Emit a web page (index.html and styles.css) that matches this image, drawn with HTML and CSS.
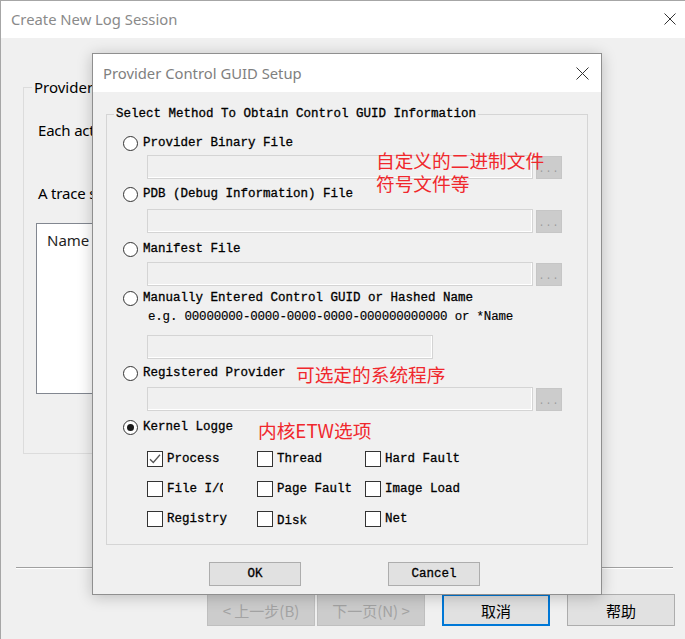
FILE: index.html
```html
<!DOCTYPE html>
<html lang="zh">
<head>
<meta charset="utf-8">
<title>Create New Log Session</title>
<link rel="stylesheet" href="styles.css">
</head>
<body>
<div class="win">
  <div class="titlebar">
    <span class="title">Create New Log Session</span>
    <svg class="close" width="12" height="12" viewBox="0 0 12 12"><path d="M0.5 0.5L11.5 11.5M11.5 0.5L0.5 11.5" stroke="#333" stroke-width="1" fill="none"/></svg>
  </div>
  <div class="win-body">
    <fieldset class="outer-group">
      <legend>Provider List</legend>
      <p class="outer-text t1">Each active provider in the trace session is listed below.</p>
      <p class="outer-text t2">A trace session must contain at least one provider.</p>
      <div class="listbox"><div class="list-head">Name</div></div>
    </fieldset>
    <div class="separator"></div>
    <div class="wiz-buttons">
      <button class="wbtn disabled">&lt; 上一步(B)</button>
      <button class="wbtn disabled second">下一页(N) &gt;</button>
      <button class="wbtn default">取消</button>
      <button class="wbtn">帮助</button>
    </div>
  </div>

  <div class="dialog">
    <div class="dlg-titlebar">
      <span class="dlg-title">Provider Control GUID Setup</span>
      <svg class="close" width="13" height="13" viewBox="0 0 13 13"><path d="M0.5 0.5L12.5 12.5M12.5 0.5L0.5 12.5" stroke="#333" stroke-width="1" fill="none"/></svg>
    </div>
    <fieldset class="method">
      <legend>Select Method To Obtain Control GUID Information</legend>

      <div class="opt g11"><span class="radio"></span><span class="lbl first">Provider Binary File</span></div>
      <div class="field-row g2"><div class="field"></div><div class="browse">...</div></div>

      <div class="opt g5"><span class="radio"></span><span class="lbl">PDB (Debug Information) File</span></div>
      <div class="field-row g5"><div class="field"></div><div class="browse">...</div></div>

      <div class="opt g6"><span class="radio"></span><span class="lbl">Manifest File</span></div>
      <div class="field-row g3"><div class="field"></div><div class="browse">...</div></div>

      <div class="opt g2"><span class="radio"></span><span class="lbl">Manually Entered Control GUID or Hashed Name</span></div>
      <div class="example">e.g.  00000000-0000-0000-0000-000000000000 or *Name</div>
      <div class="field-row g9"><div class="field short"></div></div>

      <div class="opt g4"><span class="radio"></span><span class="lbl">Registered Provider</span></div>
      <div class="field-row g4"><div class="field"></div><div class="browse">...</div></div>

      <div class="opt g6"><span class="radio checked"></span><span class="lbl clip">Kernel Logger</span></div>

      <div class="checks g7">
        <div class="chk"><span class="box on"><svg width="14" height="14" viewBox="0 0 14 14"><path d="M2 7.2L5.3 10.5L12 2.8" stroke="#555" stroke-width="1.3" fill="none"/></svg></span><span class="clbl">Process</span></div>
        <div class="chk"><span class="box"></span><span class="clbl">Thread</span></div>
        <div class="chk"><span class="box"></span><span class="clbl">Hard Fault</span></div>
        <div class="chk"><span class="box"></span><span class="clbl fileio">File I/O</span></div>
        <div class="chk"><span class="box"></span><span class="clbl">Page Fault</span></div>
        <div class="chk"><span class="box"></span><span class="clbl">Image Load</span></div>
        <div class="chk"><span class="box"></span><span class="clbl">Registry</span></div>
        <div class="chk"><span class="box"></span><span class="clbl low">Disk</span></div>
        <div class="chk"><span class="box"></span><span class="clbl">Net</span></div>
      </div>
    </fieldset>
    <div class="dlg-buttons">
      <button class="dbtn">OK</button>
      <button class="dbtn cancel">Cancel</button>
    </div>
  </div>
</div>

<div class="note n1">自定义的二进制文件<br>符号文件等</div>
<div class="note n2">可选定的系统程序</div>
<div class="note n3">内核ETW选项</div>
</body>
</html>
```

FILE: styles.css
```css
* { box-sizing: border-box; }
html, body { margin: 0; padding: 0; }
body {
  width: 685px;
  height: 639px;
  overflow: hidden;
  background: #f0f0f0;
  font-family: "Noto Sans", "Noto Sans CJK SC", sans-serif;
}

/* ---------- outer window ---------- */
.win {
  position: relative;
  width: 685px;
  height: 639px;
  border-top: 1px solid #a6a6a6;
  border-left: 1px solid #a6a6a6;
  background: #f0f0f0;
}
.titlebar {
  height: 37px;
  background: #fff;
  display: flex;
  align-items: center;
  justify-content: space-between;
  padding: 0 9px 1px 10px;
}
.title {
  font-size: 14.8px;
  color: #8a8a8a;
}
.close { display: block; }

.win-body { display: flex; flex-direction: column; }

.outer-group {
  margin: 39px 0 0 22px;
  width: 568px;
  padding: 0 0 59px 0;
  border: 1px solid #dcdcdc;
}
.outer-group legend {
  margin-left: 8px;
  padding: 0 2px;
  font-size: 15px;
  line-height: 20px;
  color: #000;
}
.outer-text {
  margin: 23px 0 0 14px;
  font-size: 15px;
  line-height: 20px;
  white-space: nowrap;
  color: #000;
  letter-spacing: -0.2px;
}
.outer-text.t2 { margin-top: 43px; }
.listbox {
  margin: 20px 0 0 12px;
  height: 171px;
  border: 1px solid #828790;
  background: #fff;
}
.list-head {
  margin-top: 6px;
  padding-left: 10px;
  font-size: 15px;
  line-height: 20px;
  color: #1e1e1e;
}

.separator {
  margin: 113px 12px 0 15px;
  height: 2px;
  border-top: 1px solid #a0a0a0;
  border-bottom: 1px solid #fff;
}
.wiz-buttons {
  display: flex;
  margin-top: 25px;
  padding-left: 206px;
}
.wbtn {
  width: 108px;
  height: 32px;
  margin: 0 0 0 17px;
  padding: 0;
  border: 1px solid #adadad;
  background: #e1e1e1;
  font-family: "Noto Sans CJK SC", "Noto Sans", sans-serif;
  font-size: 15px;
  color: #000;
}
.wbtn:first-child { margin-left: 0; }
.wbtn.disabled {
  background: #cccccc;
  border-color: #bfbfbf;
  color: #a3a3a3;
}
.wbtn.second { margin-left: 2px; }
.wbtn.default {
  border: 2px solid #0078d7;
}

/* ---------- inner dialog ---------- */
.dialog {
  position: absolute;
  left: 91px;
  top: 52px;
  width: 510px;
  height: 542px;
  border: 1px solid #8f8f8f;
  background: #f0f0f0;
  box-shadow: 0 2px 14px rgba(0, 0, 0, 0.22);
  display: flex;
  flex-direction: column;
}
.dlg-titlebar {
  height: 38px;
  background: #fff;
  display: flex;
  align-items: center;
  justify-content: space-between;
  padding: 0 12px 0 10px;
}
.dlg-title {
  font-size: 14.8px;
  color: #808080;
}

.method {
  margin: 14px 13px 0 13px;
  padding: 0 0 10px 0;
  border: 1px solid #d5d5d5;
  font-family: "Liberation Mono", "DejaVu Sans Mono", monospace;
  font-size: 12.5px;
  color: #000;
  -webkit-text-stroke: 0.3px #000;
  display: flex;
  flex-direction: column;
}
.method legend {
  margin-left: 7px;
  padding: 0 2px;
  line-height: 16px;
}

.g2 { margin-top: 2px; }
.g3 { margin-top: 3px; }
.g4 { margin-top: 4px; }
.g5 { margin-top: 5px; }
.g6 { margin-top: 6px; }
.g7 { margin-top: 7px; }
.g9 { margin-top: 9px; }
.g11 { margin-top: 11px; }

.opt {
  display: flex;
  align-items: center;
  height: 20px;
  margin-left: 16px;
  white-space: nowrap;
}
.radio {
  width: 15px;
  height: 15px;
  border: 1px solid #333;
  border-radius: 50%;
  background: #fff;
  display: flex;
  align-items: center;
  justify-content: center;
  flex: none;
  -webkit-text-stroke: 0;
}
.radio.checked::after {
  content: "";
  width: 7px;
  height: 7px;
  border-radius: 50%;
  background: #1a1a1a;
}
.lbl { margin-left: 5px; line-height: 20px; }
.lbl.clip {
  width: 90px;
  overflow: hidden;
}

.field-row {
  display: flex;
  margin-left: 40px;
  height: 24px;
}
.field {
  width: 386px;
  height: 24px;
  border: 1px solid #d4d4d4;
  background: #f0f0f0;
  box-shadow: inset -1px -1px 0 #fff;
}
.field.short { width: 286px; }
.browse {
  width: 26px;
  height: 23px;
  margin: 1px 0 0 3px;
  background: #cccccc;
  border: 1px solid #c6c6c6;
  color: #9a9a9a;
  -webkit-text-stroke: 0;
  font-size: 10px;
  letter-spacing: 1px;
  text-align: center;
  line-height: 26px;
  overflow: hidden;
}
.example {
  margin-left: 41px;
  height: 18px;
  line-height: 18px;
  white-space: nowrap;
  letter-spacing: -0.2px;
  -webkit-text-stroke: 0.15px #000;
}

.checks {
  margin-left: 40px;
  display: grid;
  grid-template-columns: 110px 108px 100px;
  grid-auto-rows: 30px;
  align-items: center;
}
.chk {
  display: flex;
  align-items: center;
  white-space: nowrap;
}
.box {
  width: 16px;
  height: 16px;
  border: 1px solid #333;
  background: #fff;
  flex: none;
  display: flex;
  align-items: center;
  justify-content: center;
}
.box svg { display: block; }
.clbl { margin-left: 4px; line-height: 20px; }
.clbl.low { margin-top: 3px; }
.clbl.fileio {
  width: 56px;
  overflow: hidden;
}

.dlg-buttons {
  display: flex;
  margin-top: 17px;
  padding-left: 116px;
}
.dbtn {
  width: 92px;
  height: 24px;
  padding: 0;
  border: 1px solid #adadad;
  background: #e1e1e1;
  font-family: "Liberation Mono", "DejaVu Sans Mono", monospace;
  font-size: 12.5px;
  color: #000;
  -webkit-text-stroke: 0.3px #000;
}
.dbtn.cancel { margin-left: 87px; }

/* ---------- red annotations ---------- */
.note {
  position: absolute;
  font-family: "Noto Sans CJK SC", sans-serif;
  font-size: 18.7px;
  line-height: 23px;
  color: #f0282d;
  white-space: nowrap;
}
.n1 { left: 376px; top: 148px; }
.n2 { left: 296px; top: 362px; }
.n3 { left: 258px; top: 418px; }
```
